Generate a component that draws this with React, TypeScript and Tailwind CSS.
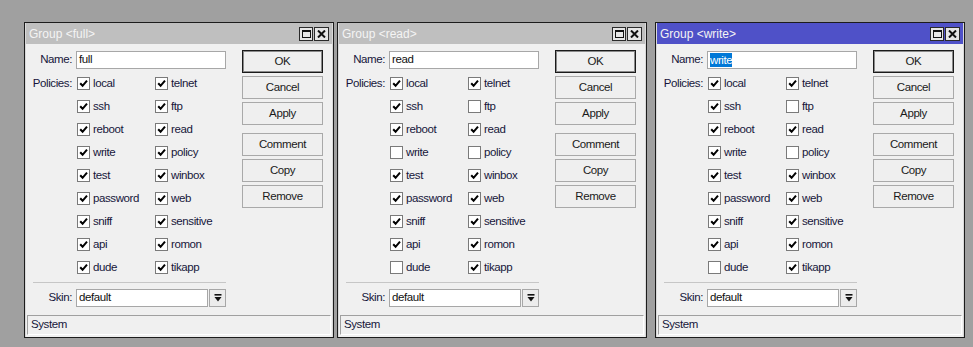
import React from 'react';

const POLICY_ROWS: [string, string][] = [
  ['local', 'telnet'],
  ['ssh', 'ftp'],
  ['reboot', 'read'],
  ['write', 'policy'],
  ['test', 'winbox'],
  ['password', 'web'],
  ['sniff', 'sensitive'],
  ['api', 'romon'],
  ['dude', 'tikapp'],
];

type Group = { name: string; active?: boolean; unchecked: string[] };

const GROUPS: Group[] = [
  { name: 'full', unchecked: [] },
  { name: 'read', unchecked: ['ftp', 'write', 'policy', 'dude'] },
  { name: 'write', active: true, unchecked: ['ftp', 'policy', 'dude'] },
];

const Checkbox = ({ checked, label }: { checked: boolean; label: string }) => (
  <div className="flex items-center w-[78px] shrink-0">
    <span className="w-[13px] h-[13px] border border-[#7a7a7a] bg-white flex items-center justify-center shrink-0">
      {checked && (
        <svg width="9" height="9" viewBox="0 0 9 9">
          <path d="M1.2 4.2 L3.6 6.8 L8 1.6" stroke="#000" strokeWidth="2" fill="none" />
        </svg>
      )}
    </span>
    <span className="ml-[3px] text-[#16163a] whitespace-nowrap">{label}</span>
  </div>
);

const Button = ({ label, primary }: { label: string; primary?: boolean }) => (
  <div
    className={`h-[23px] w-[81px] flex items-center justify-center bg-[#efefef] text-[#1a1a1a] border ${
      primary ? 'border-[#1a1a1a] shadow-[inset_0_0_0_1px_#8a8a8a]' : 'border-[#a9a9a9]'
    }`}
  >
    {label}
  </div>
);

const TitleButtons = () => (
  <div className="flex gap-px">
    <div className="w-[14px] h-[14px] border border-[#2a2a2a] bg-[#e6e6e6] flex items-center justify-center">
      <div className="w-[9px] h-[8px] border border-[#111] border-t-2" />
    </div>
    <div className="w-[15px] h-[14px] border border-[#2a2a2a] bg-[#e6e6e6] flex items-center justify-center">
      <svg width="9" height="8" viewBox="0 0 9 8">
        <path d="M1 0.5 L8 7.5 M8 0.5 L1 7.5" stroke="#111" strokeWidth="2" />
      </svg>
    </div>
  </div>
);

const Label = ({ text }: { text: string }) => (
  <span className="w-[50px] shrink-0 pr-[4px] text-right text-[#16163a] whitespace-nowrap">{text}</span>
);

const GroupWindow = ({ group }: { group: Group }) => (
  <div className="w-[310px] h-[316px] shrink-0 border border-[#1c1c1c] bg-[#d9d9d9] px-px flex flex-col">
    {/* title bar */}
    <div
      className={`h-[21px] flex items-center justify-between pl-[3px] pr-[3px] ${
        group.active ? 'bg-[#4f51c8]' : 'bg-[#bfbfbf]'
      }`}
    >
      <span className="text-[#f4f4f4] text-[12px] tracking-normal">Group &lt;{group.name}&gt;</span>
      <TitleButtons />
    </div>

    {/* body */}
    <div className="flex-1 bg-[#f0f0f0] flex flex-col pb-[2px]">
      <div className="flex">
        <div className="w-[200px] shrink-0 flex flex-col pt-[7px]">
          <div className="flex items-center h-[18px]">
            <Label text="Name:" />
            <div className="w-[150px] h-[18px] shrink-0 border border-[#a7a7a7] bg-white flex items-center pl-[2px]">
              {group.active ? (
                <span className="bg-[#0078d7] text-white leading-[14px]">{group.name}</span>
              ) : (
                <span className="text-[#111]">{group.name}</span>
              )}
            </div>
          </div>

          <div className="mt-[3px] flex flex-col">
            {POLICY_ROWS.map(([a, b], i) => (
              <div key={a} className="h-[23px] flex items-center">
                <Label text={i === 0 ? 'Policies:' : ''} />
                <div className="ml-px flex">
                  <Checkbox label={a} checked={!group.unchecked.includes(a)} />
                  <Checkbox label={b} checked={!group.unchecked.includes(b)} />
                </div>
              </div>
            ))}
          </div>

          <div className="mt-[3px] ml-[7px] w-[193px] h-px bg-[#c6c6c6]" />

          <div className="mt-[6px] flex items-center h-[18px]">
            <Label text="Skin:" />
            <div className="w-[132px] h-[18px] shrink-0 border border-[#a7a7a7] bg-white flex items-center pl-[2px] text-[#111]">
              default
            </div>
            <div className="ml-px w-[17px] h-[18px] shrink-0 border border-[#a7a7a7] bg-[#ececec] flex items-center justify-center">
              <svg width="8" height="8" viewBox="0 0 8 8">
                <rect x="0.5" y="0" width="7" height="1.6" fill="#111" />
                <path d="M0.5 3 L7.5 3 L4 7.5 Z" fill="#111" />
              </svg>
            </div>
          </div>
        </div>

        <div className="ml-[16px] pt-[6px] flex flex-col gap-[3px]">
          <Button label="OK" primary />
          <Button label="Cancel" />
          <Button label="Apply" />
          <div className="mt-[5px] flex flex-col gap-[3px]">
            <Button label="Comment" />
            <Button label="Copy" />
            <Button label="Remove" />
          </div>
        </div>
      </div>

      <div className="mt-auto mx-px h-[20px] border-t border-l border-[#a0a0a0] border-r border-b border-r-white border-b-white flex items-center pl-[3px] text-[#16163a]">
        System
      </div>
    </div>
  </div>
);

export default function App() {
  return (
    <div className="w-[973px] h-[347px] bg-[#a0a0a0] pt-[22px] pl-[24px] flex items-start font-['Liberation_Sans',Arial,sans-serif] text-[11.5px] tracking-[-0.4px] overflow-hidden">
      <GroupWindow group={GROUPS[0]} />
      <div className="ml-[3px]">
        <GroupWindow group={GROUPS[1]} />
      </div>
      <div className="ml-[8px]">
        <GroupWindow group={GROUPS[2]} />
      </div>
    </div>
  );
}
